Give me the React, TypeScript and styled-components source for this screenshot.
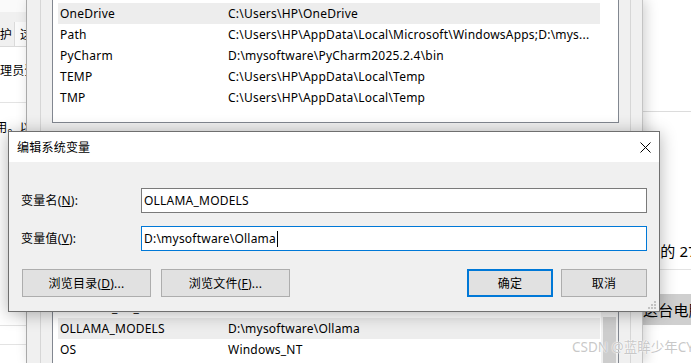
import React from 'react';
import styled, { createGlobalStyle } from 'styled-components';

const UI_FONT = `"Noto Sans", "Noto Sans CJK SC", sans-serif`;

const GlobalStyle = createGlobalStyle`
    html, body {
        margin: 0;
        padding: 0;
        background: #fff;
    }
    body {
        font-family: ${UI_FONT};
        font-size: 12px;
        letter-spacing: 0.22px;
        color: #000;
    }
`;

const Desktop = styled.div`
    position: relative;
    width: 691px;
    height: 363px;
    overflow: hidden;
    background: #fff;
`;

/* ---------- window peeking on the left ---------- */
const LeftWindow = styled.div`
    position: absolute;
    left: 0;
    top: 0;
    width: 26px;
    height: 100%;
    overflow: hidden;
    background: #fff;
    display: flex;
    flex-direction: column;
`;

const Band = styled.div<{ $h: number; $bg: string }>`
    flex: none;
    height: ${p => p.$h}px;
    background: ${p => p.$bg};
`;

const TabRow = styled.div`
    flex: none;
    height: 24px;
    display: flex;
    background: #f0f0f0;
    border-bottom: 1px solid #dadada;
`;

const Tab = styled.div<{ $w: number; $active?: boolean }>`
    flex: none;
    width: ${p => p.$w}px;
    display: flex;
    align-items: center;
    justify-content: ${p => (p.$active ? 'flex-end' : 'flex-start')};
    padding: ${p => (p.$active ? '0 2px 0 0' : '0 0 0 5px')};
    box-sizing: border-box;
    background: ${p => (p.$active ? '#f0f0f0' : '#fafafa')};
    border-right: 1px solid #dadada;
    white-space: nowrap;
`;

const ClippedText = styled.div<{ $top: number; $shift: number }>`
    flex: none;
    margin-top: ${p => p.$top}px;
    margin-left: ${p => p.$shift}px;
    line-height: 16px;
    white-space: nowrap;
`;

const HLine = styled.div<{ $top: number; $color?: string }>`
    flex: none;
    margin-top: ${p => p.$top}px;
    height: 1px;
    background: ${p => p.$color ?? '#e3e3e3'};
`;

/* ---------- window peeking on the right ---------- */
const RightWindow = styled.div`
    position: absolute;
    left: 643px;
    top: 0;
    width: 48px;
    height: 100%;
    overflow: hidden;
    background: #fff;
    display: flex;
    flex-direction: column;
    font-size: 15px;
`;

const NavItem = styled.div`
    flex: none;
    margin-top: 24px;
    height: 31px;
    background: #cfcfcf;
    display: flex;
    align-items: center;
    white-space: nowrap;
`;

/* ---------- system properties + environment variables ---------- */
const SysWindow = styled.div`
    position: absolute;
    left: 26px;
    top: 0;
    width: 617px;
    height: 100%;
    box-sizing: border-box;
    background: #f0f0f0;
    border-left: 1px solid #a9a9a9;
    border-right: 1px solid #c4c4c4;
    box-shadow: 3px 0 12px rgba(0, 0, 0, 0.18);
    padding: 0 11px 0 13px;
    display: flex;
`;

const EnvWindow = styled.div`
    flex: 1;
    border-left: 1px solid #d6d6d6;
    border-right: 1px solid #d6d6d6;
    padding: 0 11px;
    display: flex;
    flex-direction: column;
`;

const List = styled.div<{ $h: number; $top: number }>`
    flex: none;
    height: ${p => p.$h}px;
    margin-top: ${p => p.$top}px;
    box-sizing: border-box;
    border: 1px solid #828790;
    background: #fff;
    display: flex;
    overflow: hidden;
`;

const Rows = styled.div<{ $pad: number }>`
    flex: 1;
    padding: ${p => p.$pad}px 0 0 5px;
    display: flex;
    flex-direction: column;
`;

const Row = styled.div<{ $selected?: boolean }>`
    flex: none;
    height: 21px;
    display: grid;
    grid-template-columns: 168px 1fr;
    align-items: center;
    padding-left: 2px;
    background: ${p => (p.$selected ? '#ededed' : 'transparent')};
    white-space: nowrap;
    overflow: hidden;
`;

const ScrollTrack = styled.div<{ $visible?: boolean }>`
    flex: none;
    width: 17px;
    margin-left: 1px;
    background: ${p => (p.$visible ? '#f0f0f0' : '#fff')};
    display: flex;
    flex-direction: column;
    padding: 0 2px;
    box-sizing: border-box;
`;

const ScrollThumb = styled.div`
    margin-top: 20px;
    height: 48px;
    background: #cdcdcd;
`;

/* ---------- the dialog ---------- */
const Dialog = styled.div`
    position: absolute;
    left: 8px;
    top: 131px;
    width: 652px;
    box-sizing: border-box;
    border: 1px solid #6f6f6f;
    background: #f0f0f0;
    box-shadow: 0 2px 16px rgba(0, 0, 0, 0.3);
    display: flex;
    flex-direction: column;
`;

const TitleBar = styled.div`
    height: 30px;
    background: #fff;
    display: flex;
    align-items: center;
    padding-left: 8px;
`;

const Title = styled.span`
    flex: 1;
`;

const CloseButton = styled.div`
    width: 28px;
    height: 30px;
    display: flex;
    align-items: center;
    justify-content: center;
`;

const Body = styled.div`
    position: relative;
    padding: 26px 12px 14px 12px;
    display: flex;
    flex-direction: column;
`;

const Form = styled.div`
    display: grid;
    grid-template-columns: 120px 1fr;
    row-gap: 13px;
    align-items: center;
`;

const Label = styled.label`
    line-height: 16px;
`;

const Field = styled.div<{ $focused?: boolean }>`
    height: 25px;
    box-sizing: border-box;
    border: 1px solid ${p => (p.$focused ? '#0078d7' : '#7a7a7a')};
    background: #fff;
    padding-left: 2px;
    display: flex;
    align-items: center;
    white-space: nowrap;
`;

const Caret = styled.span`
    display: inline-block;
    width: 1px;
    height: 16px;
    margin-left: 1px;
    background: #000;
`;

const ButtonBar = styled.div`
    margin-top: 18px;
    display: flex;
    justify-content: space-between;
`;

const ButtonGroup = styled.div<{ $gap: number; $indent?: number }>`
    display: flex;
    gap: ${p => p.$gap}px;
    margin-left: ${p => p.$indent ?? 0}px;
`;

const Button = styled.div<{ $w: number; $primary?: boolean }>`
    width: ${p => p.$w}px;
    height: 28px;
    box-sizing: border-box;
    background: #e1e1e1;
    border: ${p => (p.$primary ? '2px solid #0078d7' : '1px solid #adadad')};
    display: flex;
    align-items: center;
    justify-content: center;
    white-space: nowrap;
`;

const Grip = styled.svg`
    position: absolute;
    right: 1px;
    bottom: 0;
`;

const Watermark = styled.div`
    position: absolute;
    left: 572px;
    top: 339px;
    font-size: 13.5px;
    line-height: 17px;
    letter-spacing: 0;
    color: rgba(190, 190, 190, 0.85);
    text-shadow: 0 0 1px #fff, 0 0 2px #fff;
    white-space: nowrap;
`;

type EnvVar = { name: string; value: string; selected?: boolean };

const userVars: EnvVar[] = [
    { name: 'OneDrive', value: 'C:\\Users\\HP\\OneDrive', selected: true },
    { name: 'Path', value: 'C:\\Users\\HP\\AppData\\Local\\Microsoft\\WindowsApps;D:\\mys...' },
    { name: 'PyCharm', value: 'D:\\mysoftware\\PyCharm2025.2.4\\bin' },
    { name: 'TEMP', value: 'C:\\Users\\HP\\AppData\\Local\\Temp' },
    { name: 'TMP', value: 'C:\\Users\\HP\\AppData\\Local\\Temp' },
];

const systemVars: EnvVar[] = [
    { name: 'NUMBER_OF_PROCESSORS', value: '16' },
    { name: 'OLLAMA_MODELS', value: 'D:\\mysoftware\\Ollama', selected: true },
    { name: 'OS', value: 'Windows_NT' },
];

const CloseIcon = () => (
    <svg width="11" height="11" viewBox="0 0 11 11">
        <path d="M0.5 0.5 L10.5 10.5 M10.5 0.5 L0.5 10.5" stroke="#000" strokeWidth="1" />
    </svg>
);

const GripIcon = () => (
    <Grip width="12" height="12" viewBox="0 0 12 12">
        {[[8, 0], [5, 3], [8, 3], [2, 6], [5, 6], [8, 6]].map(([x, y]) => (
            <rect key={`${x}-${y}`} x={x} y={y + 2} width="2" height="2" fill="#c2c2c2" />
        ))}
    </Grip>
);

const VarList = ({ items, height, top, pad, scroll }: {
    items: EnvVar[]; height: number; top: number; pad: number; scroll?: boolean;
}) => (
    <List $h={height} $top={top}>
        <Rows $pad={pad}>
            {items.map(item => (
                <Row key={item.name} $selected={item.selected}>
                    <span>{item.name}</span>
                    <span>{item.value}</span>
                </Row>
            ))}
        </Rows>
        <ScrollTrack $visible={scroll}>
            {scroll && <ScrollThumb />}
        </ScrollTrack>
    </List>
);

export default function App() {
    return (
        <>
            <GlobalStyle />
            <Desktop>
                <LeftWindow>
                    <Band $h={12} $bg="#fafafa" />
                    <Band $h={10} $bg="#f0f0f0" />
                    <TabRow>
                        <Tab $w={15} $active>护</Tab>
                        <Tab $w={20}>这</Tab>
                    </TabRow>
                    <ClippedText $top={16} $shift={0}>理员登录</ClippedText>
                    <HLine $top={23} />
                    <ClippedText $top={17} $shift={-17}>使用。以</ClippedText>
                    <HLine $top={189} />
                    <HLine $top={18} />
                </LeftWindow>

                <RightWindow>
                    <HLine $top={111} $color="#dcdcdc" />
                    <ClippedText $top={131} $shift={2}>户的 27</ClippedText>
                    <HLine $top={10} $color="#e3e3e3" />
                    <NavItem>这台电脑</NavItem>
                </RightWindow>

                <SysWindow>
                    <EnvWindow>
                        <VarList items={userVars} height={124} top={-1} pad={3} />
                        <VarList items={systemVars} height={100} top={173} pad={0} scroll />
                    </EnvWindow>
                </SysWindow>

                <Dialog>
                    <TitleBar>
                        <Title>编辑系统变量</Title>
                        <CloseButton><CloseIcon /></CloseButton>
                    </TitleBar>
                    <Body>
                        <Form>
                            <Label>变量名(<u>N</u>):</Label>
                            <Field>OLLAMA_MODELS</Field>
                            <Label>变量值(<u>V</u>):</Label>
                            <Field $focused>D:\mysoftware\Ollama<Caret /></Field>
                        </Form>
                        <ButtonBar>
                            <ButtonGroup $gap={10} $indent={1}>
                                <Button $w={129}>浏览目录(<u>D</u>)...</Button>
                                <Button $w={129}>浏览文件(<u>F</u>)...</Button>
                            </ButtonGroup>
                            <ButtonGroup $gap={8}>
                                <Button $w={86} $primary>确定</Button>
                                <Button $w={86}>取消</Button>
                            </ButtonGroup>
                        </ButtonBar>
                        <GripIcon />
                    </Body>
                </Dialog>

                <Watermark>CSDN @蓝眸少年CY</Watermark>
            </Desktop>
        </>
    );
}
